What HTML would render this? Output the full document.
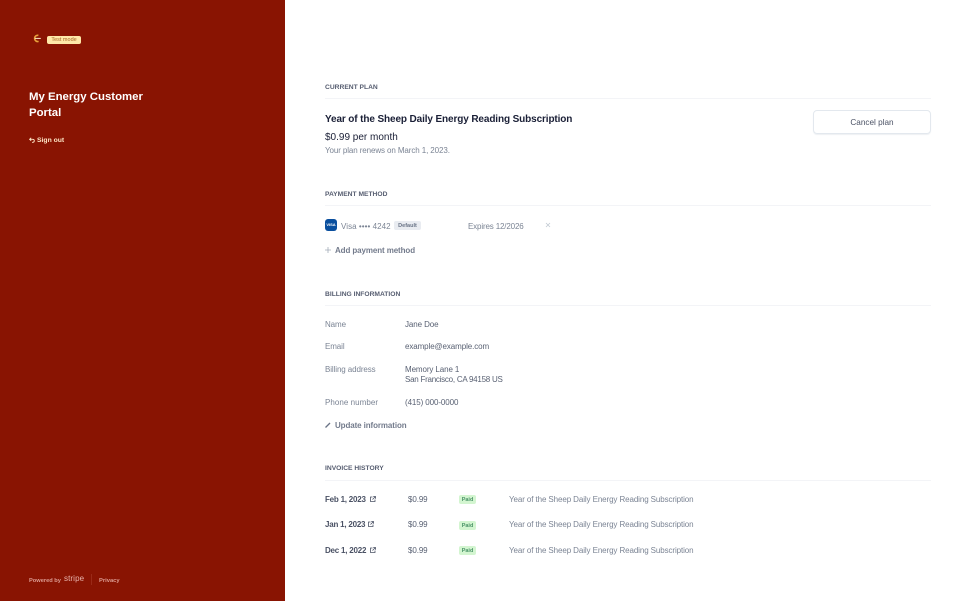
<!DOCTYPE html>
<html><head><meta charset="utf-8"><style>
html,body{margin:0;padding:0;width:970px;height:601px;overflow:hidden;background:#fff}
body{font-family:"Liberation Sans",sans-serif;position:relative;color:#596173}
.t{position:absolute;white-space:nowrap;line-height:12px;font-size:8px;letter-spacing:-.1px}
.side{position:absolute;left:0;top:0;width:285px;height:601px;background:#891402}
.t.h{font-size:6.7px;font-weight:bold;color:#565d70;letter-spacing:0}
.l{position:absolute;left:325px;width:606px;height:1px;background:#f3f4f7}
.g{color:#7b8494}
.t.b{font-weight:bold;color:#4a5164;letter-spacing:-.22px}
.t.a{font-weight:bold;color:#737b8c;letter-spacing:-.1px}
.p{position:absolute;left:459px;width:17px;height:9px;background:#d3f5d0;border-radius:2px;color:#4b9468;font-size:5.5px;font-weight:bold;line-height:11px;text-align:center}
svg{position:absolute}
</style></head><body>
<div class="side"></div>
<svg style="left:31px;top:33px" width="11" height="11" viewBox="0 0 11 11" fill="none" stroke-width="1.6"><path stroke="#e8a33c" d="M7.4 2.4A3.1 3.1 0 1 0 7.6 8.4"/><path stroke="#fbe6c8" stroke-width="1" d="M3.8 5.4h6"/></svg>
<div style="position:absolute;left:47px;top:36px;width:34px;height:8px;background:#ffe8a8;border-radius:2px;color:#a8672a;font-size:5.5px;line-height:9px;text-align:center">Test mode</div>
<div class="t" style="left:29px;top:89px;font-size:11.4px;line-height:16px;font-weight:bold;color:#fff;white-space:normal;width:125px;letter-spacing:0">My Energy Customer Portal</div>
<svg style="left:29px;top:137px" width="6" height="6" viewBox="0 0 6 6" fill="none" stroke="#ffe8c8" stroke-width=".9"><path d="M2.2.8.6 2.3l1.6 1.5M.6 2.3h3.2a1.5 1.5 0 0 1 0 3H3"/></svg>
<div class="t" style="left:37px;top:135px;font-size:6.8px;font-weight:bold;color:#ffe8c8;letter-spacing:0">Sign out</div>
<div class="t" style="left:29px;top:575px;font-size:5.7px;font-weight:bold;color:#dc9c92;letter-spacing:0">Powered by</div>
<div class="t" style="left:64px;top:573px;font-size:8px;color:#e8b4ac;letter-spacing:.1px">stripe</div>
<div style="position:absolute;left:91px;top:574px;width:1px;height:11px;background:#9a2a18"></div>
<div class="t" style="left:99px;top:575px;font-size:5.8px;font-weight:bold;color:#dc9c92;letter-spacing:0">Privacy</div>

<div class="t h" style="left:325px;top:82px">CURRENT PLAN</div><div class="l" style="top:98px"></div>
<div class="t" style="left:325px;top:114px;font-size:10px;font-weight:bold;color:#1a1f36;letter-spacing:-.12px">Year of the Sheep Daily Energy Reading Subscription</div>
<div class="t" style="left:325px;top:132px;font-size:10px;color:#1a1f36;letter-spacing:0">$0.99 per month</div>
<div class="t g" style="left:325px;top:145px">Your plan renews on March 1, 2023.</div>
<div style="position:absolute;left:813px;top:110px;width:116px;height:22px;border:1px solid #e3e8ee;border-radius:4px;box-shadow:0 1px 1px #eef0f3;color:#4a5164;font-size:8.2px;line-height:23px;text-align:center">Cancel plan</div>

<div class="t h" style="left:325px;top:189px">PAYMENT METHOD</div><div class="l" style="top:205px"></div>
<div style="position:absolute;left:325px;top:219px;width:12px;height:12px;background:#0a4f9e;border-radius:3px;color:#fff;font-size:4px;font-weight:bold;line-height:12px;text-align:center">VISA</div>
<div class="t g" style="left:341px;top:221px;letter-spacing:.05px">Visa •••• 4242</div>
<div style="position:absolute;left:394px;top:221px;width:27px;height:9px;background:#e9ecf1;border-radius:2px;color:#697386;font-size:5.5px;font-weight:bold;line-height:11px;text-align:center">Default</div>
<div class="t g" style="left:468px;top:221px;letter-spacing:-.15px">Expires 12/2026</div>
<svg style="left:545px;top:222px" width="6" height="6" viewBox="0 0 6 6" stroke="#c1c9d2" stroke-width=".8"><path d="M1 1l4 4M5 1 1 5"/></svg>
<svg style="left:325px;top:247px" width="6" height="6" viewBox="0 0 6 6" stroke="#a3acb9" stroke-width=".8"><path d="M3 0v6M0 3h6"/></svg>
<div class="t a" style="left:335px;top:245px">Add payment method</div>

<div class="t h" style="left:325px;top:289px">BILLING INFORMATION</div><div class="l" style="top:305px"></div>
<div class="t g" style="left:325px;top:319px">Name</div><div class="t" style="left:405px;top:319px">Jane Doe</div>
<div class="t g" style="left:325px;top:341px">Email</div><div class="t" style="left:405px;top:341px">example@example.com</div>
<div class="t g" style="left:325px;top:364px">Billing address</div>
<div class="t" style="left:405px;top:364px">Memory Lane 1</div>
<div class="t" style="left:405px;top:374px;letter-spacing:-.25px">San Francisco, CA 94158 US</div>
<div class="t g" style="left:325px;top:397px;letter-spacing:.05px">Phone number</div><div class="t" style="left:405px;top:397px">(415) 000-0000</div>
<svg style="left:325px;top:422px" width="6" height="6" viewBox="0 0 6 6" stroke="#697386" stroke-width="1.3"><path d="M.5 5.5 5 1"/></svg>
<div class="t a" style="left:335px;top:420px">Update information</div>

<div class="t h" style="left:325px;top:463px">INVOICE HISTORY</div><div class="l" style="top:480px"></div>

<div class="t b" style="left:325px;top:494px">Feb 1, 2023</div>
<svg style="left:370px;top:496px" width="6" height="6" viewBox="0 0 6 6" fill="none" stroke="#4a5164" stroke-width=".8"><path d="M2.5 1H.5v4.5H5v-2M3.2 0.5H5.5V2.8M5.5.5 2.5 3.5"/></svg>
<div class="t" style="left:408px;top:494px">$0.99</div><div class="p" style="top:495px">Paid</div>
<div class="t g" style="left:509px;top:494px">Year of the Sheep Daily Energy Reading Subscription</div>

<div class="t b" style="left:325px;top:519px">Jan 1, 2023</div>
<svg style="left:368px;top:521px" width="6" height="6" viewBox="0 0 6 6" fill="none" stroke="#4a5164" stroke-width=".8"><path d="M2.5 1H.5v4.5H5v-2M3.2 0.5H5.5V2.8M5.5.5 2.5 3.5"/></svg>
<div class="t" style="left:408px;top:519px">$0.99</div><div class="p" style="top:521px">Paid</div>
<div class="t g" style="left:509px;top:519px">Year of the Sheep Daily Energy Reading Subscription</div>

<div class="t b" style="left:325px;top:545px">Dec 1, 2022</div>
<svg style="left:370px;top:547px" width="6" height="6" viewBox="0 0 6 6" fill="none" stroke="#4a5164" stroke-width=".8"><path d="M2.5 1H.5v4.5H5v-2M3.2 0.5H5.5V2.8M5.5.5 2.5 3.5"/></svg>
<div class="t" style="left:408px;top:545px">$0.99</div><div class="p" style="top:546px">Paid</div>
<div class="t g" style="left:509px;top:545px">Year of the Sheep Daily Energy Reading Subscription</div>
</body></html>
